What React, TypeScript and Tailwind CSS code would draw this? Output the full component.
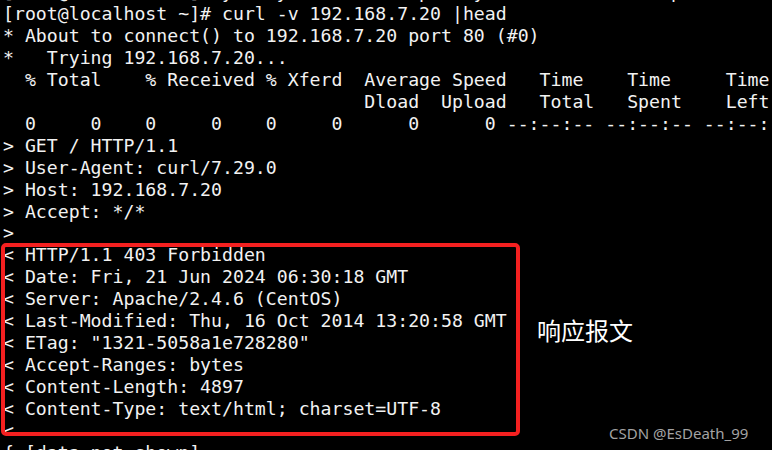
const lines = [
  "[root@localhost ~]# yum -y install httpd; systemctl start httpd",
  "[root@localhost ~]# curl -v 192.168.7.20 |head",
  "* About to connect() to 192.168.7.20 port 80 (#0)",
  "*   Trying 192.168.7.20...",
  "  % Total    % Received % Xferd  Average Speed   Time    Time     Time  Current",
  "                                 Dload  Upload   Total   Spent    Left  Speed",
  "  0     0    0     0    0     0      0      0 --:--:-- --:--:-- --:--:--     0",
  "> GET / HTTP/1.1",
  "> User-Agent: curl/7.29.0",
  "> Host: 192.168.7.20",
  "> Accept: */*",
  ">",
  "< HTTP/1.1 403 Forbidden",
  "< Date: Fri, 21 Jun 2024 06:30:18 GMT",
  "< Server: Apache/2.4.6 (CentOS)",
  "< Last-Modified: Thu, 16 Oct 2014 13:20:58 GMT",
  '< ETag: "1321-5058a1e728280"',
  "< Accept-Ranges: bytes",
  "< Content-Length: 4897",
  "< Content-Type: text/html; charset=UTF-8",
  "<",
  "{ [data not shown]",
];

export default function App() {
  return (
    <div className="relative w-[772px] h-[450px] overflow-hidden bg-black">
      <pre className="-mt-[19px] pl-[3px] text-[18.2px] leading-[21.95px] text-[#f2f2f2] font-['DejaVu_Sans_Mono',monospace] whitespace-pre">
        {lines.map((l, i) => (
          <div key={i}>{l || " "}</div>
        ))}
      </pre>

      {/* annotation box */}
      <div className="absolute left-[1px] top-[243px] w-[519px] h-[193px] rounded-[5px] border-4 border-[#f42020]"></div>

      <div className="absolute left-[537px] top-[314px] text-[24px] leading-[32px] text-white font-['Noto_Sans_CJK_SC',sans-serif]">
        响应报文
      </div>

      <div className="absolute left-[609px] top-[423px] text-[15px] leading-[20px] text-[#a3a3a3] font-['Noto_Sans',sans-serif]">
        CSDN @EsDeath_99
      </div>
    </div>
  );
}
